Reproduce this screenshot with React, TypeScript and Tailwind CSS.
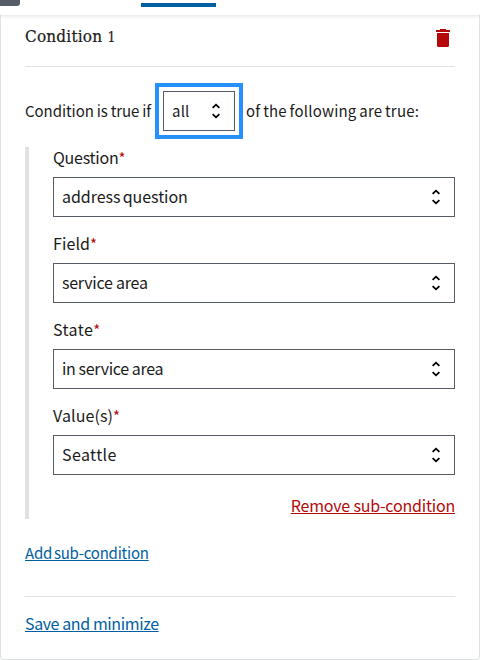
const fields = [
  { label: "Question", value: "address question", labelSpacing: "tracking-[-0.25px]", valueSpacing: "tracking-[-0.05px] [word-spacing:-1.2px]" },
  { label: "Field", value: "service area", labelSpacing: "tracking-[0.1px]", valueSpacing: "tracking-[-0.25px]" },
  { label: "State", value: "in service area", labelSpacing: "tracking-[0.4px]", valueSpacing: "tracking-[-0.3px] [word-spacing:-0.3px]" },
  { label: "Value(s)", value: "Seattle", labelSpacing: "tracking-[0.1px]", valueSpacing: "tracking-[0.4px]" },
];

function Chevrons() {
  return (
    <svg className="h-5 w-5 shrink-0" viewBox="0 0 20 20" fill="none" stroke="#000" strokeWidth="1.8">
      <path d="M6.6 6.9 10 3.7l3.4 3.2M6.6 13.1l3.4 3.2 3.4-3.2" />
    </svg>
  );
}

function Trash() {
  return (
    <svg className="h-[18px] w-[14px]" viewBox="0 0 14 18" fill="#b50909">
      <path d="M0 1h4V0h6v1h4v2H0zM1 4h12v12.5q0 1.5-1.5 1.5h-9Q1 18 1 16.5z" />
    </svg>
  );
}

export default function App() {
  return (
    <div className="flex h-[660px] w-[480px] flex-col overflow-hidden bg-white font-['Noto_Sans_CJK_JP','Noto_Sans_CJK_SC',sans-serif] text-[#1b1b1b]">
      <header className="z-10 flex h-[15px] shrink-0 items-start bg-white shadow-[0_1px_4px_rgba(0,0,0,0.12)]">
        <div className="h-[6px] w-[20px] rounded-br-[3px] bg-[#565c65]" />
        <div className="mt-[3px] ml-[121px] h-1 w-[75px] bg-[#005ea2]" />
      </header>
      <main className="flex h-[645px] flex-col rounded-b-[4px] border-x border-b border-[#dfe1e2] px-6">
        <div className="flex h-[52px] shrink-0 items-start justify-between border-b border-[#dfe1e2]">
          <h1 className="mt-[9px] font-['DejaVu_Serif_Condensed','DejaVu_Serif',serif] text-[17px] leading-6 tracking-[0.2px] [-webkit-text-stroke:0.2px_#1b1b1b]">
            Condition <span className="text-[14px]">1</span>
          </h1>
          <button className="mt-[14px] mr-[5px]" aria-label="Delete condition">
            <Trash />
          </button>
        </div>
        <div className="mt-4 flex h-14 shrink-0 items-center whitespace-nowrap text-[15px]">
          <span className="w-[130px] tracking-[-0.05px] [word-spacing:-0.4px]">Condition is true if</span>
          <div className="flex h-14 w-[88px] border-4 border-[#2491ff] p-1">
            <div className="flex grow items-center justify-between border border-[#565c65] pr-[8px] pl-2">
              <span className="tracking-[0.2px]">all</span>
              <Chevrons />
            </div>
          </div>
          <span className="ml-[3px] tracking-[0.2px] [word-spacing:-0.8px]">of the following are true:</span>
        </div>
        <section className="mt-2 flex h-[372px] shrink-0 flex-col border-l-4 border-[#dfe1e2] pl-6 text-[16px]">
          {fields.map((f) => (
            <div key={f.label} className="flex h-[86px] flex-col whitespace-nowrap">
              <div className="h-[30px] leading-5">
                <span className={f.labelSpacing}>{f.label}</span>
                <span className="text-[15px] text-[#b50909]">*</span>
              </div>
              <div className="flex h-10 items-center justify-between border border-[#565c65] pr-[8px] pl-2">
                <span className={`pb-[2px] ${f.valueSpacing}`}>{f.value}</span>
                <Chevrons />
              </div>
            </div>
          ))}
          <button className="mt-[2px] self-end leading-6 tracking-[-0.2px] text-[#b50909] underline">Remove sub-condition</button>
        </section>
        <div className="flex h-[78px] shrink-0 border-b border-[#dfe1e2] pt-[22px]">
          <button className="h-6 text-[15px] leading-6 tracking-[-0.22px] text-[#005ea2] underline [word-spacing:-1.3px]">Add sub-condition</button>
        </div>
        <div className="flex pt-[14px]">
          <button className="text-[16px] leading-6 tracking-[-0.4px] text-[#005ea2] underline">Save and minimize</button>
        </div>
      </main>
    </div>
  );
}
